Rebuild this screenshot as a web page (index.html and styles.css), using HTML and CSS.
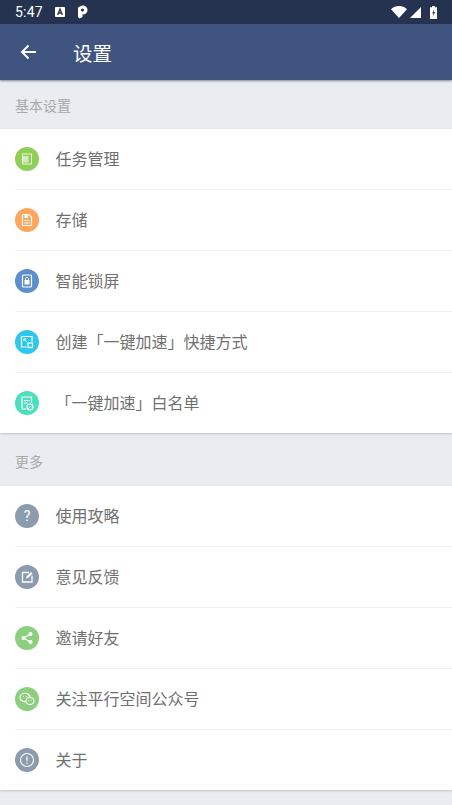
FILE: index.html
```html
<!DOCTYPE html>
<html lang="zh">
<head>
<meta charset="utf-8">
<title>设置</title>
<link rel="stylesheet" href="styles.css">
</head>
<body>
<div class="status">
  <span class="time">5:47</span>
  <svg class="s-a" viewBox="0 0 10 10"><rect width="10" height="10" rx="1" fill="#fff"/><path d="M2.600 8 5 2l2.400 6M3.600 6h2.800" fill="none" stroke="#253350" stroke-width="1.300"/></svg>
  <svg class="s-p" viewBox="0 0 11 14"><path d="M1 2.500 5 .5c3.500 0 5.500 2 5.500 4.500S8.500 9.500 5.500 9.500V12l-3 1.500L1 12z" fill="#fff"/><circle cx="5.500" cy="5" r="1.600" fill="#253350"/></svg>
  <span class="grow"></span>
  <svg class="s-w" viewBox="0 0 16 12"><path d="M0 3.200C4.500-1 11.500-1 16 3.200L8 12z" fill="#fff"/></svg>
  <svg class="s-c" viewBox="0 0 12 12"><path d="M12 0v12H0z" fill="#fff"/></svg>
  <svg class="s-b" viewBox="0 0 7 13"><path d="M2 0h3v1.200h2V13H0V1.200h2z" fill="#fff"/><path d="M4.200 3 2.200 7.500h1.300L2.900 10.500 5 6H3.700z" fill="#253350"/></svg>
</div>
<header class="bar">
  <svg class="back" viewBox="0 0 16 16"><path d="M16 8H2M8.500 1.500 2 8l6.500 6.500" fill="none" stroke="#fff" stroke-width="1.900"/></svg>
  <h1>设置</h1>
</header>
<main>
  <div class="head">基本设置</div>
  <ul class="list">
    <li><span class="ic green"><svg viewBox="0 0 24 24"><rect x="7.500" y="7" width="9" height="10" fill="none" stroke="#fff" stroke-opacity=".8"/><rect x="7.500" y="9" width="6" height="6.500" fill="#fff" fill-opacity=".6"/></svg></span><span class="lab">任务管理</span></li>
    <li><span class="ic orange"><svg viewBox="0 0 24 24"><path d="M7.500 6.500h6.500l2.500 2.500v8.500h-9z" fill="none" stroke="#fff" stroke-width="1.200"/><path d="M9.500 12.500h5M9.500 15h5" fill="none" stroke="#fff"/><path d="M9.500 7h3.500v3H9.500z" fill="#fff"/></svg></span><span class="lab">存储</span></li>
    <li><span class="ic blue"><svg viewBox="0 0 24 24"><rect x="7.500" y="6" width="9" height="12" rx="1" fill="none" stroke="#fff" stroke-width="1.200"/><rect x="9.500" y="11" width="5" height="4.500" fill="#fff"/><path d="M10.500 11v-1.200a1.500 1.500 0 0 1 3 0V11" fill="none" stroke="#fff"/></svg></span><span class="lab">智能锁屏</span></li>
    <li><span class="ic cyan"><svg viewBox="0 0 24 24"><path d="M11.500 17H6.500V6.500H17v5" fill="none" stroke="#fff" stroke-width="1.200"/><rect x="13" y="13" width="4.500" height="4.500" fill="none" stroke="#fff" stroke-width="1.200"/><path d="M9 9l2.800 2.800" stroke="#fff"/><path d="M8.500 8.500h3l-3 3z" fill="#fff"/></svg></span><span class="lab">创建「一键加速」快捷方式</span></li>
    <li><span class="ic teal"><svg viewBox="0 0 24 24"><path d="M11 18H7V6h9.500v6" fill="none" stroke="#fff" stroke-width="1.200"/><path d="M9 9.500h5.500M9 12h3.500" stroke="#fff"/><circle cx="15" cy="16" r="3" fill="none" stroke="#fff" stroke-width="1.200"/><path d="M13.500 17.500l3-3" stroke="#fff"/></svg></span><span class="lab">「一键加速」白名单</span></li>
  </ul>
  <div class="head more">更多</div>
  <ul class="list">
    <li><span class="ic slate q">?</span><span class="lab">使用攻略</span></li>
    <li><span class="ic slate"><svg viewBox="0 0 24 24"><path d="M14 7.500H7.500v9.500h9.500v-6.500" fill="none" stroke="#fff" stroke-width="1.300"/><path d="M11 13.500l.5-2L16 7l1.500 1.500-4.500 4.500z" fill="#fff"/></svg></span><span class="lab">意见反馈</span></li>
    <li><span class="ic lime"><svg viewBox="0 0 24 24"><path d="M15.500 8 8.500 12l7 4" fill="none" stroke="#fff" stroke-width="1.100"/><circle cx="15.500" cy="8" r="2" fill="#fff"/><circle cx="8.500" cy="12" r="2" fill="#fff"/><circle cx="15.500" cy="16" r="2" fill="#fff"/></svg></span><span class="lab">邀请好友</span></li>
    <li><span class="ic lime"><svg viewBox="0 0 24 24"><ellipse cx="10" cy="10.500" rx="5" ry="4.300" fill="none" stroke="#fff" stroke-width="1.100"/><ellipse cx="15" cy="14" rx="4" ry="3.500" fill="#8ccf7e" stroke="#fff" stroke-width="1.100"/><path d="M13.500 13.500h.8M15.700 13.500h.8M8 9.500h.8M11 9.500h.8" stroke="#fff"/></svg></span><span class="lab">关注平行空间公众号</span></li>
    <li><span class="ic slate"><svg viewBox="0 0 24 24"><circle cx="12" cy="12" r="6.500" fill="none" stroke="#fff" stroke-width="1.100"/><path d="M12 8.500v4.500M12 14.500v1.300" stroke="#fff" stroke-width="1.300"/></svg></span><span class="lab">关于</span></li>
  </ul>
</main>
</body>
</html>
```
FILE: styles.css
```css
* { box-sizing: border-box; }
html, body { margin: 0; padding: 0; }
body {
  width: 452px;
  height: 805px;
  overflow: hidden;
  background: #e9ecf0;
  font-family: "Roboto", "Noto Sans CJK SC", sans-serif;
}
.status {
  height: 24px;
  background: #253350;
  display: flex;
  align-items: center;
  padding: 0 15px 0 15px;
  color: #fff;
}
.time { font-size: 14px; letter-spacing: .2px; width: 40px; }
.s-a { width: 10px; height: 10px; }
.s-p { width: 11px; height: 14px; margin-left: 12px; }
.grow { flex: 1; }
.s-w { width: 16px; height: 12px; }
.s-c { width: 11px; height: 11px; margin-left: 3px; }
.s-b { width: 7px; height: 13px; margin-left: 9px; }
.bar {
  height: 56px;
  background: #3f5580;
  display: flex;
  align-items: center;
  padding-left: 20px;
  box-shadow: 0 1px 2px rgba(40, 50, 70, .55);
  position: relative;
}
.back { width: 16px; height: 16px; }
.bar h1 {
  margin: 0 0 0 37px;
  font-size: 19.500px;
  font-weight: 400;
  color: #fff;
}
.head {
  height: 49px;
  padding: 0 15px;
  line-height: 52px;
  font-size: 14px;
  color: #a8a9ab;
}
.more { height: 53px; padding-top: 4px; line-height: 50px; }
.list {
  list-style: none;
  margin: 0;
  padding: 0;
  background: #fff;
  box-shadow: 0 1px 2px rgba(0, 0, 0, .18);
}
.list li {
  height: 61px;
  display: flex;
  align-items: center;
  gap: 16.500px;
  margin-left: 15px;
  font-size: 16px;
  color: #707070;
  border-bottom: 1px solid #f0f0f0;
}
.lab { line-height: 20px; padding-top: 2px; }
.list li:last-child { border-bottom: 0; height: 60px; }
.ic {
  width: 24px;
  height: 24px;
  border-radius: 50%;
  flex: none;
  display: flex;
  align-items: center;
  justify-content: center;
}
.ic svg { width: 24px; height: 24px; display: block; }
.green { background: #8fcf57; }
.orange { background: #fea55e; }
.blue { background: #5b8fcb; }
.cyan { background: #2dc8ec; }
.teal { background: #4cdfbd; }
.slate { background: #8b9cae; }
.lime { background: #8ccf7e; }
.q { color: #fff; font-size: 14px; }
```
